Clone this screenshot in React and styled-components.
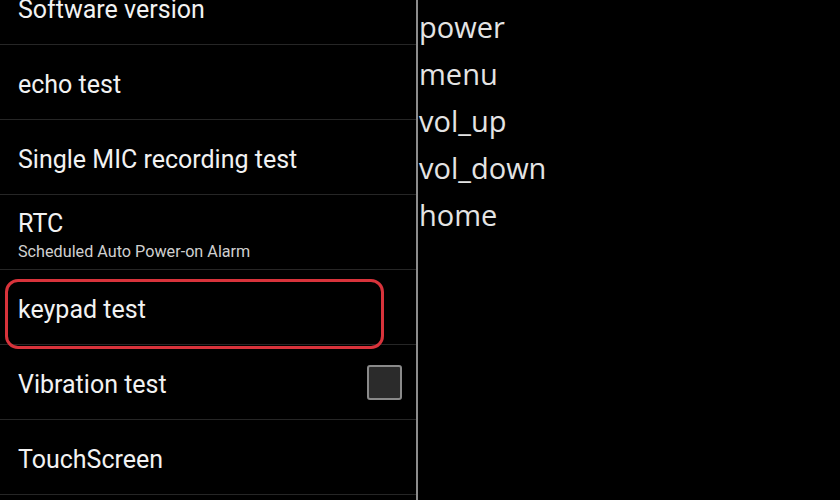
import React from "react";
import styled, { createGlobalStyle } from "styled-components";

const Global = createGlobalStyle`
  html, body { margin: 0; padding: 0; background: #000; }
  body { width: 840px; height: 500px; overflow: hidden; }
`;

const Screen = styled.div`
  display: flex;
  width: 840px;
  height: 500px;
  background: #000;
  overflow: hidden;
`;

const LeftPane = styled.div`
  width: 416px;
  flex: none;
  overflow: hidden;
`;

const Separator = styled.div`
  width: 2px;
  flex: none;
  background: #8c8c8c;
`;

const List = styled.div`
  display: flex;
  flex-direction: column;
  margin-top: -30px;
`;

const Row = styled.div`
  position: relative;
  height: 74px;
  border-bottom: 1px solid #262626;
  display: flex;
  align-items: center;
  justify-content: space-between;
  padding: 0 14px 0 18px;
  box-sizing: content-box;
  width: calc(100% - 32px);
`;

const Texts = styled.div`
  display: flex;
  flex-direction: column;
  justify-content: center;
  padding-top: ${(p) => (p.$sub ? "8px" : "5px")};
`;

const Title = styled.div`
  font-family: Roboto, "Liberation Sans", sans-serif;
  font-size: 25px;
  line-height: 28px;
  color: #f2f2f2;
`;

const Subtitle = styled.div`
  font-family: Roboto, "Liberation Sans", sans-serif;
  font-size: 16.2px;
  line-height: 20px;
  color: #d0d0d0;
  margin-top: 4px;
`;

const Highlight = styled.div`
  position: absolute;
  left: 5px;
  top: 9px;
  width: 373px;
  height: 64px;
  border: 3px solid #d8333b;
  border-radius: 13px;
  pointer-events: none;
`;

const Checkbox = styled.div`
  width: 31px;
  height: 31px;
  border: 2px solid #8a8a8a;
  border-radius: 3px;
  background: #2b2b2b;
  flex: none;
`;

const RightPane = styled.div`
  flex: 1;
  padding: 3px 0 0 1px;
  display: flex;
  flex-direction: column;
`;

const KeyName = styled.div`
  font-family: "Open Sans", "DejaVu Sans", sans-serif;
  font-size: 29px;
  line-height: 47px;
  color: #e4e4e4;
`;

const rows = [
  { title: "Software version" },
  { title: "echo test" },
  { title: "Single MIC recording test" },
  { title: "RTC", sub: "Scheduled Auto Power-on Alarm" },
  { title: "keypad test", highlight: true },
  { title: "Vibration test", checkbox: true },
  { title: "TouchScreen" },
  { title: "" },
];

const keys = ["power", "menu", "vol_up", "vol_down", "home"];

export default function App() {
  return (
    <>
      <Global />
      <Screen>
        <LeftPane>
          <List>
            {rows.map((r, i) => (
              <Row key={i}>
                <Texts $sub={!!r.sub}>
                  <Title>{r.title}</Title>
                  {r.sub && <Subtitle>{r.sub}</Subtitle>}
                </Texts>
                {r.checkbox && <Checkbox />}
                {r.highlight && <Highlight />}
              </Row>
            ))}
          </List>
        </LeftPane>
        <Separator />
        <RightPane>
          {keys.map((k) => (
            <KeyName key={k}>{k}</KeyName>
          ))}
        </RightPane>
      </Screen>
    </>
  );
}
